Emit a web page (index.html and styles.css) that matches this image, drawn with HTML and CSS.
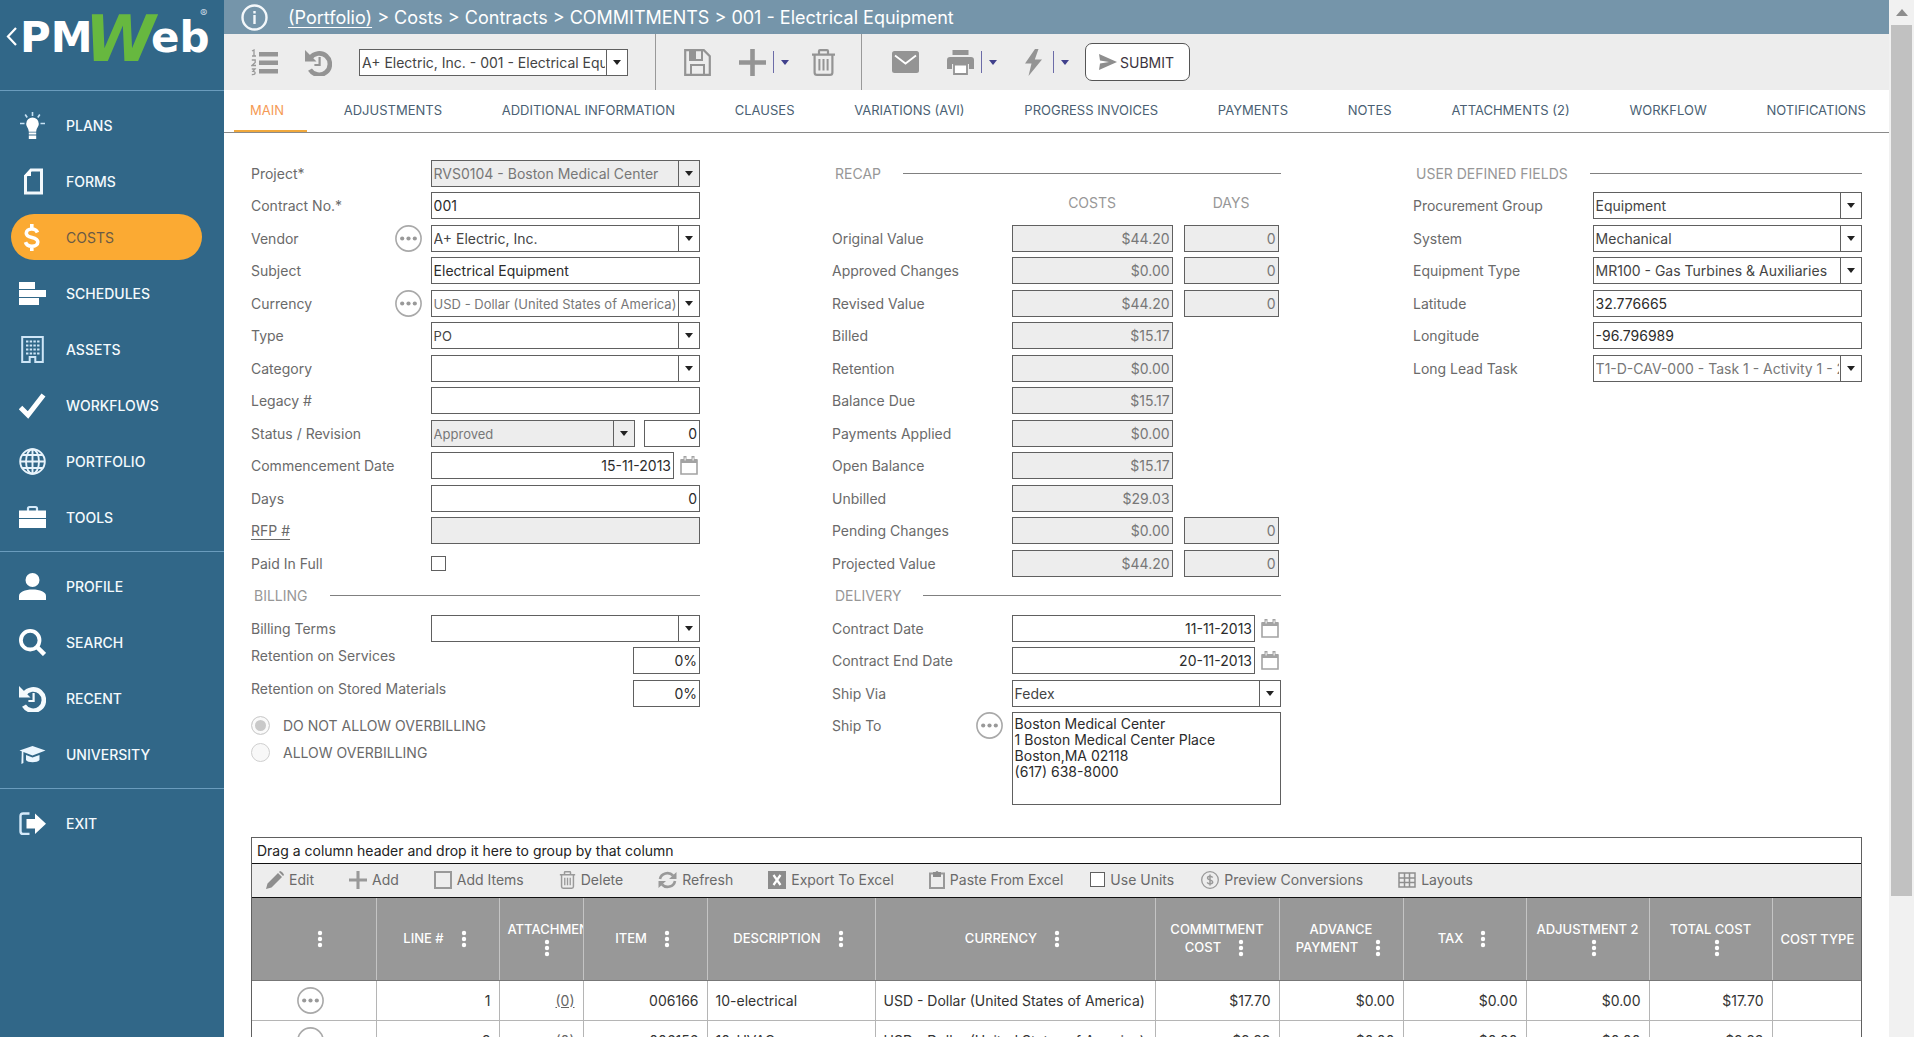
FILE: index.html
```html
<!DOCTYPE html>
<html lang="en">

<head>
    <meta charset="utf-8">
    <meta name="viewport" content="width=device-width, initial-scale=1">
    <title>001 - Electrical Equipment</title>

    <link rel="stylesheet" href="styles.css">
</head>

<body>
    <!-- shared icons -->
    <svg class="sprite" aria-hidden="true">
        <symbol id="i-more" viewBox="0 0 27 27">
            <circle cx="13.5" cy="13.5" r="12.6" fill="#fff" stroke="#a9a9a9" stroke-width="1.6" />
            <circle cx="7.2" cy="13.5" r="2.1" fill="#999" />
            <circle cx="13.5" cy="13.5" r="2.1" fill="#999" />
            <circle cx="19.8" cy="13.5" r="2.1" fill="#999" />
        </symbol>
        <symbol id="i-dots" viewBox="0 0 16 18">
            <circle cx="8" cy="3" r="2.2" />
            <circle cx="8" cy="9" r="2.2" />
            <circle cx="8" cy="15" r="2.2" />
        </symbol>
        <symbol id="i-cal" viewBox="0 0 18 19">
            <path d="M1 4h16v14H1z" fill="none" stroke="#a3a3a3" stroke-width="1.6" />
            <path d="M1 3h16v4H1zM3.5 0h3v4h-3zM11.5 0h3v4h-3z" fill="#a3a3a3" />
            <path d="M4.6 1.4h1v3h-1zM12.6 1.4h1v3h-1z" fill="#fff" />
        </symbol>
        <symbol id="i-history" viewBox="0 0 27 27">
            <path d="M5.2 9.2A10.7 10.7 0 1 1 5 20.6" fill="none" stroke="currentColor" stroke-width="4.6" />
            <path d="M0 1v11.5h11.5z" fill="currentColor" />
            <path d="M14.6 8v8H9.4" fill="none" stroke="currentColor" stroke-width="2.2" />
        </symbol>
        <symbol id="i-trash" viewBox="0 0 25 27">
            <path d="M1 5.6h23M8 5V2.2Q8 1.2 9 1.2h7q1 0 1 1V5M3.6 6v17.4q0 2.4 2.4 2.4h13q2.4 0 2.4-2.4V6" fill="none" stroke="currentColor" stroke-width="2.2" />
            <path d="M8.4 10v11.5M12.5 10v11.5M16.6 10v11.5" stroke="currentColor" stroke-width="2" />
        </symbol>
        <symbol id="i-plus" viewBox="0 0 27 27">
            <path d="M11.2 0h4.6v11.2H27v4.6H15.8V27h-4.6V15.8H0v-4.6h11.2z" fill="currentColor" />
        </symbol>
    </svg>

    <div class="app">
        <aside class="sidebar">
            <a href="#" class="logo" aria-label="PMWeb">
                <svg width="224" height="68" viewBox="0 0 224 68">
                    <path d="M16 28l-8 8.5 8 8.5" fill="none" stroke="#fff" stroke-width="2.2" />
                    <text x="20" y="52" class="logo-text">PM</text>
                    <text x="85" y="61" class="logo-w">W</text>
                    <text x="151" y="52" class="logo-text">eb</text>
                    <text x="200" y="17" class="logo-reg">®</text>
                </svg>
            </a>

            <nav class="menu">
                <a href="#"><svg viewBox="0 0 27 27"><path d="M13.5 5.5a6.3 6.3 0 0 1 6.3 6.3c0 3-2.4 4.2-2.6 8H9.8c-.2-3.8-2.6-5-2.6-8a6.3 6.3 0 0 1 6.3-6.3zM9.8 20.5h7.4v2H9.8zM9.8 23.5h7.4V27H9.8z" fill="#fff" /><path d="M13.5 0v4M6.2 2.5l2 3M20.8 2.5l-2 3M1 11.5h4.5M21.5 11.5H26" stroke="#c9e3f5" stroke-width="1.6" /></svg>PLANS</a>
                <a href="#"><svg viewBox="0 0 27 27"><path d="M12 2h10.5v23h-16V8z" fill="none" stroke="#f2f8fc" stroke-width="3" /><path d="M5 8l7-7v7z" fill="#fff" /></svg>FORMS</a>
                <a href="#" class="active"><svg viewBox="0 0 27 27"><path d="M18.5 8.5C17.5 6 15.5 5 12.8 5 9.6 5 7.3 6.7 7.3 9.2c0 6 11.5 2.6 11.5 8.8 0 2.6-2.4 4.3-5.9 4.3-3.2 0-5.5-1.3-6.4-4.2M12.8 0v5M12.8 22v5" fill="none" stroke="#fff" stroke-width="3.6" /></svg>COSTS</a>
                <a href="#"><svg viewBox="0 0 27 27"><path d="M0 2h16v7H0zM0 10h27v7H0zM0 18h20v7H0z" fill="#fff" /></svg>SCHEDULES</a>
                <a href="#"><svg viewBox="0 0 27 27"><path d="M3.2 1h20.6v25h-7.5v-5h-5.6v5H3.2z" fill="none" stroke="#cfe6f7" stroke-width="2" /><path d="M7 5.5h14M7 9.5h14M7 13.5h14M7 17.5h14" stroke="#cfe6f7" stroke-width="2.2" stroke-dasharray="2.4 1.3" /></svg>ASSETS</a>
                <a href="#"><svg viewBox="0 0 27 27"><path d="M1.5 15.5L9 23 24.5 3" fill="none" stroke="#fff" stroke-width="5" /></svg>WORKFLOWS</a>
                <a href="#"><svg viewBox="0 0 27 27"><g fill="none" stroke="#e8f4fc" stroke-width="1.9"><circle cx="13.5" cy="13.5" r="12.3" /><ellipse cx="13.5" cy="13.5" rx="6.5" ry="12.3" /><path d="M13.5 1v25M1 13.5h25M3.2 7h20.6M3.2 20h20.6" /></g></svg>PORTFOLIO</a>
                <a href="#"><svg viewBox="0 0 27 27"><path d="M9 7V4.5Q9 3 10.5 3h6Q18 3 18 4.5V7" fill="none" stroke="#d5eafa" stroke-width="2.2" /><path d="M0 6.5h27V14H0zM0 15h27v9H0z" fill="#fff" /></svg>TOOLS</a>
            </nav>
            <nav class="menu">
                <a href="#"><svg viewBox="0 0 27 27"><circle cx="13.5" cy="7" r="7" fill="#fff" /><path d="M0 27v-4c0-4 6-6.5 13.5-6.5S27 19 27 23v4z" fill="#fff" /></svg>PROFILE</a>
                <a href="#"><svg viewBox="0 0 27 27"><circle cx="11.2" cy="11.2" r="9.3" fill="none" stroke="#fff" stroke-width="3.8" /><path d="M18 18l7.5 7.5" stroke="#fff" stroke-width="4.5" /></svg>SEARCH</a>
                <a href="#"><svg><use href="#i-history" /></svg>RECENT</a>
                <a href="#"><svg viewBox="0 0 27 27"><path d="M.5 9.5L13.5 5l13 4.5-13 5zM7 14l6.5 2.5 7-2.5v5c-2 3-12 3-13.5 0zM2.8 10.5h1.6V22l-2 1z" fill="#eaf6ff" /></svg>UNIVERSITY</a>
            </nav>
            <nav class="menu">
                <a href="#"><svg viewBox="0 0 27 27"><path d="M10.5 3.5H4.2Q1.5 3.5 1.5 6.2v15q0 2.7 2.7 2.7h6.3" fill="none" stroke="#d5eafa" stroke-width="2.4" /><path d="M7.5 9H16V3.5l11 10.2L16 24v-5.5H7.5z" fill="#fff" /></svg>EXIT</a>
            </nav>
        </aside>

        <main class="main">
            <header class="crumbs">
                <svg width="27" height="27" viewBox="0 0 27 27"><circle cx="13.5" cy="13.5" r="12" fill="none" stroke="#f4f8fb" stroke-width="2.4" /><path d="M12.3 11h2.4v9h-2.4zM12.3 7h2.4v2.5h-2.4z" fill="#f4f8fb" /></svg>
                <span><a href="#">(Portfolio)</a> &gt; Costs &gt; Contracts &gt; COMMITMENTS &gt; 001 - Electrical Equipment</span>
            </header>

            <div class="toolbar">
                <div class="tools tools-nav">
                    <button aria-label="Line numbers"><svg width="27" height="27" viewBox="0 0 27 27"><path d="M8 3h19v4.5H8zM8 11.5h19V16H8zM8 20h19v4.5H8z" fill="#959595" /><path d="M1 2l2-1v6M1 7h4M.8 11h3.4v2.5L1 16.5h4M.8 20H4l-2 2.3c3 0 3 3.7-1.2 3.2" fill="none" stroke="#999" stroke-width="1.3" /></svg></button>
                    <button aria-label="History"><svg width="27" height="27"><use href="#i-history" /></svg></button>
                    <select class="record" aria-label="Record">
                        <option>A+ Electric, Inc. - 001 - Electrical Equipment</option>
                    </select>
                </div>
                <div class="tools tools-edit">
                    <button aria-label="Save"><svg width="27" height="27" viewBox="0 0 27 27"><path d="M1.2 1.2h18.6l6 6v18.6H1.2z" fill="none" stroke="#949494" stroke-width="2.2" /><path d="M6 1h12v10H6zM7 16h13v10H7z" fill="none" stroke="#949494" stroke-width="2" /><path d="M6 1h6v9H6z" fill="#949494" /></svg></button>
                    <div class="split">
                        <button aria-label="Add"><svg width="27" height="27"><use href="#i-plus" /></svg></button>
                        <button class="drop" aria-label="Add options"></button>
                    </div>
                    <button aria-label="Delete"><svg width="25" height="27"><use href="#i-trash" /></svg></button>
                </div>
                <div class="tools tools-send">
                    <button aria-label="Email"><svg width="27" height="22" viewBox="0 0 27 22"><rect width="27" height="22" rx="2.5" fill="#949494" /><path d="M3 4.5l10.5 8L24 4.5" fill="none" stroke="#fff" stroke-width="1.8" /></svg></button>
                    <div class="split">
                        <button aria-label="Print"><svg width="27" height="25" viewBox="0 0 27 25"><path d="M5.5 0h16v5h-16zM3 7h21q3 0 3 3v9h-5v-5H5v5H0v-9q0-3 3-3z" fill="#949494" /><path d="M7 14.5h13V24H7z" fill="#fff" stroke="#949494" stroke-width="1.8" /></svg></button>
                        <button class="drop" aria-label="Print options"></button>
                    </div>
                    <div class="split">
                        <button aria-label="Actions"><svg width="21" height="27" viewBox="0 0 21 27"><path d="M10 0L0 14.5h6.5L3.5 27 17 10.5H9.8L13.5 0z" fill="#949494" /></svg></button>
                        <button class="drop" aria-label="More actions"></button>
                    </div>
                    <button class="submit"><svg width="18" height="16" viewBox="0 0 18 16"><path d="M0 0l18 8-18 8 1-6.5L10 8 1 6.5z" fill="#8e8e8e" /></svg>SUBMIT</button>
                </div>
            </div>

            <nav class="tabs">
                <a href="#" class="active">MAIN</a>
                <a href="#">ADJUSTMENTS</a>
                <a href="#">ADDITIONAL INFORMATION</a>
                <a href="#">CLAUSES</a>
                <a href="#">VARIATIONS (AVI)</a>
                <a href="#">PROGRESS INVOICES</a>
                <a href="#">PAYMENTS</a>
                <a href="#">NOTES</a>
                <a href="#">ATTACHMENTS (2)</a>
                <a href="#">WORKFLOW</a>
                <a href="#">NOTIFICATIONS</a>
            </nav>

            <form class="form">
                <div class="col">
                    <div class="row">
                        <label for="project">Project*</label>
                        <select id="project" class="field muted off"><option>RVS0104 - Boston Medical Center</option></select>
                    </div>
                    <div class="row">
                        <label for="contract">Contract No.*</label>
                        <input id="contract" class="field" type="text" value="001">
                    </div>
                    <div class="row">
                        <div class="with-more">
                            <label for="vendor">Vendor</label>
                            <button type="button" aria-label="Vendor details"><svg width="27" height="27"><use href="#i-more" /></svg></button>
                        </div>
                        <select id="vendor" class="field"><option>A+ Electric, Inc.</option></select>
                    </div>
                    <div class="row">
                        <label for="subject">Subject</label>
                        <input id="subject" class="field" type="text" value="Electrical Equipment">
                    </div>
                    <div class="row">
                        <div class="with-more">
                            <label for="currency">Currency</label>
                            <button type="button" aria-label="Currency details"><svg width="27" height="27"><use href="#i-more" /></svg></button>
                        </div>
                        <select id="currency" class="field small muted"><option>USD - Dollar (United States of America)</option></select>
                    </div>
                    <div class="row">
                        <label for="type">Type</label>
                        <select id="type" class="field small"><option>PO</option></select>
                    </div>
                    <div class="row">
                        <label for="category">Category</label>
                        <select id="category" class="field"><option></option></select>
                    </div>
                    <div class="row">
                        <label for="legacy">Legacy #</label>
                        <input id="legacy" class="field" type="text">
                    </div>
                    <div class="row">
                        <label for="status">Status / Revision</label>
                        <div class="pair">
                            <select id="status" class="field small muted off"><option>Approved</option></select>
                            <input class="field num revision" type="text" value="0" aria-label="Revision">
                        </div>
                    </div>
                    <div class="row">
                        <label for="commence">Commencement Date</label>
                        <div class="date">
                            <input id="commence" class="field num" type="text" value="15-11-2013">
                            <button type="button" aria-label="Pick date"><svg width="18" height="19"><use href="#i-cal" /></svg></button>
                        </div>
                    </div>
                    <div class="row">
                        <label for="days">Days</label>
                        <input id="days" class="field num" type="text" value="0">
                    </div>
                    <div class="row">
                        <label for="rfp"><a href="#">RFP #</a></label>
                        <input id="rfp" class="field off" type="text" readonly>
                    </div>
                    <div class="row">
                        <label for="paid">Paid In Full</label>
                        <input id="paid" class="check" type="checkbox">
                    </div>
                    <h2 class="row head">BILLING</h2>
                    <div class="row">
                        <label for="terms">Billing Terms</label>
                        <select id="terms" class="field"><option></option></select>
                    </div>
                    <div class="row wide">
                        <label for="ret1">Retention on Services</label>
                        <input id="ret1" class="field num" type="text" value="0%">
                    </div>
                    <div class="row wide">
                        <label for="ret2">Retention on Stored Materials</label>
                        <input id="ret2" class="field num" type="text" value="0%">
                    </div>
                    <div class="radios">
                        <label><input type="radio" name="over" checked>DO NOT ALLOW OVERBILLING</label>
                        <label><input type="radio" name="over">ALLOW OVERBILLING</label>
                    </div>
                </div>

                <div class="col">
                    <h2 class="row head">RECAP</h2>
                    <div class="row caption"><span></span><div class="money"><span>COSTS</span><span>DAYS</span></div></div>
                    <div class="row"><label for="r1">Original Value</label><div class="money"><input id="r1" class="field num muted off" value="$44.20" readonly><input class="field num muted off" value="0" aria-label="Original days" readonly></div></div>
                    <div class="row"><label for="r2">Approved Changes</label><div class="money"><input id="r2" class="field num muted off" value="$0.00" readonly><input class="field num muted off" value="0" aria-label="Approved days" readonly></div></div>
                    <div class="row"><label for="r3">Revised Value</label><div class="money"><input id="r3" class="field num muted off" value="$44.20" readonly><input class="field num muted off" value="0" aria-label="Revised days" readonly></div></div>
                    <div class="row"><label for="r4">Billed</label><div class="money"><input id="r4" class="field num muted off" value="$15.17" readonly></div></div>
                    <div class="row"><label for="r5">Retention</label><div class="money"><input id="r5" class="field num muted off" value="$0.00" readonly></div></div>
                    <div class="row"><label for="r6">Balance Due</label><div class="money"><input id="r6" class="field num muted off" value="$15.17" readonly></div></div>
                    <div class="row"><label for="r7">Payments Applied</label><div class="money"><input id="r7" class="field num muted off" value="$0.00" readonly></div></div>
                    <div class="row"><label for="r8">Open Balance</label><div class="money"><input id="r8" class="field num muted off" value="$15.17" readonly></div></div>
                    <div class="row"><label for="r9">Unbilled</label><div class="money"><input id="r9" class="field num muted off" value="$29.03" readonly></div></div>
                    <div class="row"><label for="r10">Pending Changes</label><div class="money"><input id="r10" class="field num muted off" value="$0.00" readonly><input class="field num muted off" value="0" aria-label="Pending days" readonly></div></div>
                    <div class="row"><label for="r11">Projected Value</label><div class="money"><input id="r11" class="field num muted off" value="$44.20" readonly><input class="field num muted off" value="0" aria-label="Projected days" readonly></div></div>
                    <h2 class="row head">DELIVERY</h2>
                    <div class="row">
                        <label for="cdate">Contract Date</label>
                        <div class="date">
                            <input id="cdate" class="field num" type="text" value="11-11-2013">
                            <button type="button" aria-label="Pick date"><svg width="18" height="19"><use href="#i-cal" /></svg></button>
                        </div>
                    </div>
                    <div class="row">
                        <label for="edate">Contract End Date</label>
                        <div class="date">
                            <input id="edate" class="field num" type="text" value="20-11-2013">
                            <button type="button" aria-label="Pick date"><svg width="18" height="19"><use href="#i-cal" /></svg></button>
                        </div>
                    </div>
                    <div class="row">
                        <label for="via">Ship Via</label>
                        <select id="via" class="field"><option>Fedex</option></select>
                    </div>
                    <div class="row top">
                        <div class="with-more">
                            <label for="shipto">Ship To</label>
                            <button type="button" aria-label="Ship to details"><svg width="27" height="27"><use href="#i-more" /></svg></button>
                        </div>
                        <textarea id="shipto" class="field">Boston Medical Center
1 Boston Medical Center Place
Boston,MA 02118
(617) 638-8000</textarea>
                    </div>
                </div>

                <div class="col">
                    <h2 class="row head">USER DEFINED FIELDS</h2>
                    <div class="row">
                        <label for="group">Procurement Group</label>
                        <select id="group" class="field"><option>Equipment</option></select>
                    </div>
                    <div class="row">
                        <label for="system">System</label>
                        <select id="system" class="field"><option>Mechanical</option></select>
                    </div>
                    <div class="row">
                        <label for="etype">Equipment Type</label>
                        <select id="etype" class="field"><option>MR100 - Gas Turbines &amp; Auxiliaries</option></select>
                    </div>
                    <div class="row">
                        <label for="lat">Latitude</label>
                        <input id="lat" class="field" type="text" value="32.776665">
                    </div>
                    <div class="row">
                        <label for="lon">Longitude</label>
                        <input id="lon" class="field" type="text" value="-96.796989">
                    </div>
                    <div class="row">
                        <label for="task">Long Lead Task</label>
                        <select id="task" class="field muted"><option>T1-D-CAV-000 - Task 1 - Activity 1 - 2</option></select>
                    </div>
                </div>
            </form>

            <section class="grid">
                <p class="group-by">Drag a column header and drop it here to group by that column</p>
                <div class="grid-tools">
                    <button><svg width="18" height="18" viewBox="0 0 18 18"><path d="M0 18l1.5-5.5L12 2l4 4L5.5 16.5zM13 1l1-1q1 0 2.5 1.5T18 4l-1 1z" fill="#8e8e8e" /></svg>Edit</button>
                    <button><svg width="18" height="18"><use href="#i-plus" /></svg>Add</button>
                    <button><svg width="18" height="18" viewBox="0 0 18 18"><path d="M1 1h16v16H1z" fill="none" stroke="#999" stroke-width="2" /></svg>Add Items</button>
                    <button><svg width="17" height="18"><use href="#i-trash" /></svg>Delete</button>
                    <button><svg width="19" height="18" viewBox="0 0 19 18"><path d="M2 8a7.5 7 0 0 1 13-3.5M17 10a7.5 7 0 0 1-13 3.5" fill="none" stroke="#999" stroke-width="2.6" /><path d="M18.5 1v7H11zM.5 17v-7H8z" fill="#999" /></svg>Refresh</button>
                    <button><svg width="18" height="18" viewBox="0 0 18 18"><path d="M0 0h18v18H0z" fill="#8c8c8c" /><path d="M5.5 4l7 10M12.5 4l-7 10" stroke="#fff" stroke-width="2.2" /></svg>Export To Excel</button>
                    <button><svg width="16" height="18" viewBox="0 0 16 18"><path d="M1 2.5h14V17H1z" fill="none" stroke="#999" stroke-width="2" /><path d="M4 1h2.5q1.5-2 3 0H12v5H4z" fill="#8c8c8c" /></svg>Paste From Excel</button>
                    <label><input class="check" type="checkbox">Use Units</label>
                    <button><svg width="18" height="18" viewBox="0 0 18 18"><circle cx="9" cy="9" r="8.3" fill="none" stroke="#999" stroke-width="1.3" /><path d="M11.7 6.5C10 4.3 6.5 5 6.5 7c0 2.5 5.2 1.5 5.2 4 0 2.2-4 2.6-5.5.3M9 3.5v11" fill="none" stroke="#999" stroke-width="1.5" /></svg>Preview Conversions</button>
                    <button><svg width="18" height="16" viewBox="0 0 18 16"><path d="M1 1h16v14H1zM1 6h16M1 10.5h16M6.5 1v14M11.5 1v14" fill="none" stroke="#8e8e8e" stroke-width="1.5" /></svg>Layouts</button>
                </div>
                <table>
                    <colgroup>
                        <col class="w-menu"><col class="w-line"><col class="w-att"><col class="w-menu"><col class="w-desc"><col class="w-cur">
                        <col class="w-menu"><col class="w-menu"><col class="w-line"><col class="w-line"><col class="w-line"><col>
                    </colgroup>
                    <thead>
                        <tr>
                            <th><svg class="dots"><use href="#i-dots" /></svg></th>
                            <th>LINE #<svg class="dots"><use href="#i-dots" /></svg></th>
                            <th>ATTACHMENTS<br><svg class="dots"><use href="#i-dots" /></svg></th>
                            <th>ITEM<svg class="dots"><use href="#i-dots" /></svg></th>
                            <th>DESCRIPTION<svg class="dots"><use href="#i-dots" /></svg></th>
                            <th>CURRENCY<svg class="dots"><use href="#i-dots" /></svg></th>
                            <th>COMMITMENT<br>COST<svg class="dots"><use href="#i-dots" /></svg></th>
                            <th>ADVANCE<br>PAYMENT<svg class="dots"><use href="#i-dots" /></svg></th>
                            <th>TAX<svg class="dots"><use href="#i-dots" /></svg></th>
                            <th>ADJUSTMENT 2<br><svg class="dots"><use href="#i-dots" /></svg></th>
                            <th>TOTAL COST<br><svg class="dots"><use href="#i-dots" /></svg></th>
                            <th>COST TYPE</th>
                        </tr>
                    </thead>
                    <tbody>
                        <tr>
                            <td class="mid"><button aria-label="Row menu"><svg width="27" height="27"><use href="#i-more" /></svg></button></td>
                            <td class="num">1</td>
                            <td class="num"><a href="#">(0)</a></td>
                            <td class="num">006166</td>
                            <td>10-electrical</td>
                            <td>USD - Dollar (United States of America)</td>
                            <td class="num">$17.70</td>
                            <td class="num">$0.00</td>
                            <td class="num">$0.00</td>
                            <td class="num">$0.00</td>
                            <td class="num">$17.70</td>
                            <td></td>
                        </tr>
                        <tr>
                            <td class="mid"><button aria-label="Row menu"><svg width="27" height="27"><use href="#i-more" /></svg></button></td>
                            <td class="num">2</td>
                            <td class="num"><a href="#">(0)</a></td>
                            <td class="num">006156</td>
                            <td>10-HVAC</td>
                            <td>USD - Dollar (United States of America)</td>
                            <td class="num">$8.83</td>
                            <td class="num">$0.00</td>
                            <td class="num">$0.00</td>
                            <td class="num">$0.00</td>
                            <td class="num">$8.83</td>
                            <td></td>
                        </tr>
                    </tbody>
                </table>
            </section>
        </main>

        <div class="scrollbar" aria-hidden="true">
            <span class="scroll-up"></span>
            <span class="scroll-thumb"></span>
        </div>
    </div>
</body>

</html>
```

FILE: styles.css
```css
* {
    box-sizing: border-box;
}

body {
    margin: 0;
    font-family: Inter, "Noto Sans", sans-serif;
    font-size: 14px;
    color: #6a6a6a;
    background-color: #fff;
    overflow: hidden;
}

button {
    display: flex;
    align-items: center;
    padding: 0;
    border: none;
    background: none;
    font: inherit;
    color: inherit;
    cursor: pointer;
}

svg {
    display: block;
}

.sprite {
    display: none;
}

.app {
    display: flex;
    height: 100vh;
}

/* Sidebar */
.sidebar {
    flex: 0 0 224px;
    background-color: #316788;
}

.logo {
    display: block;
    height: 90px;
}

.logo-text {
    font: bold 42px "DejaVu Sans", sans-serif;
    fill: #fff;
}

.logo-w {
    font: italic bold 64px "DejaVu Sans", sans-serif;
    fill: #67b83f;
}

.logo-reg {
    font-size: 11px;
    fill: #c5d6e2;
}

.menu {
    padding: 6px 22px 6px 11px;
    border-top: 1px solid #6a9cbd;
}

.menu a {
    display: flex;
    align-items: center;
    gap: 20px;
    height: 46px;
    margin: 5px 0 10px;
    padding-left: 8px;
    border-radius: 23px;
    color: #f4fafd;
    font-weight: 500;
    text-decoration: none;
}

.menu a:last-child {
    margin-bottom: 5px;
}

.menu a.active {
    background-color: #fbaa33;
    color: #6a5a45;
    font-weight: 400;
}

.menu svg {
    width: 27px;
    height: 27px;
}

/* Top bars */
.main {
    flex: 1;
    min-width: 0;
    overflow: hidden;
}

.crumbs {
    display: flex;
    align-items: center;
    gap: 20px;
    height: 34px;
    padding: 0 17px;
    background-color: #7595aa;
    color: #fff;
    font-size: 18px;
}

.crumbs a {
    color: inherit;
    text-underline-offset: 3px;
}

.toolbar {
    display: flex;
    height: 56px;
    background-color: #ededed;
}

.tools {
    display: flex;
    align-items: center;
    gap: 28px;
    padding: 0 28px;
    border-right: 1px solid #999;
    color: #949494;
}

.tools-nav {
    gap: 27px;
    padding: 0 27px;
}

.tools-edit {
    padding: 0 25px 0 28px;
}

.tools-edit .split {
    margin-right: -6px;
}

.tools-send {
    padding-left: 30px;
    border-right: none;
}

.tools-send .submit {
    margin-left: -12px;
}

.split {
    display: flex;
    align-items: center;
    gap: 7px;
}

.drop {
    height: 22px;
    padding-left: 7px;
    border-left: 1px solid #6c6ca8;
}

.drop::before {
    content: "";
    border: 4px solid transparent;
    border-top: 5px solid #40408c;
    border-bottom: none;
}

.submit {
    gap: 3px;
    height: 38px;
    padding: 0 15px 0 13px;
    border: 1px solid #555;
    border-radius: 7px;
    background-color: #fff;
    color: #3c3440;
}

.tabs {
    display: flex;
    justify-content: space-between;
    height: 43px;
    padding-left: 10px;
    border-bottom: 1px solid #8a8a8a;
}

.tabs a {
    padding: 12px 23px 0 16px;
    border-bottom: 2px solid transparent;
    color: #4a5f73;
    font-size: 13px;
    line-height: 16px;
    text-decoration: none;
    white-space: nowrap;
}

.tabs a.active {
    border-color: #f0a83c;
    color: #f59a55;
}

/* Form */
.form {
    display: grid;
    grid-template-columns: repeat(3, 1fr);
    gap: 132px;
    padding: 27px 27px 32px;
}

.row {
    display: grid;
    grid-template-columns: 2fr 3fr;
    align-items: center;
    height: 27px;
    margin: 0 0 5px;
    white-space: nowrap;
}

.row:nth-child(even) {
    margin-bottom: 6px;
}

.row a {
    color: inherit;
    text-underline-offset: 3px;
}

.row.top {
    height: auto;
    align-items: start;
    margin: 0;
}

.row.wide {
    grid-template-columns: 1fr 67px;
}

.row.wide label {
    align-self: start;
}

.row.head {
    display: flex;
    gap: 22px;
    padding-left: 3px;
    color: #979797;
    font-size: 14px;
    font-weight: 400;
}

.row.head::after {
    content: "";
    flex: 1;
    border-top: 1px solid #808080;
}

.row.caption {
    padding-bottom: 6px;
    color: #979797;
    text-align: center;
}

.with-more {
    display: flex;
    align-items: center;
    justify-content: space-between;
    padding-right: 9px;
}

.field,
.record {
    width: 100%;
    min-width: 0;
    height: 27px;
    padding: 0 2px;
    border: 1px solid #606060;
    border-radius: 0;
    background-color: #fff;
    color: #2b2b2b;
    font: inherit;
}

select.field,
.record {
    appearance: none;
    padding-right: 22px;
    background-image: url("data:image/svg+xml,%3Csvg xmlns='http://www.w3.org/2000/svg' width='21' height='25'%3E%3Cpath d='M.5 0v25' stroke='%23606060'/%3E%3Cpath d='M7 10h8l-4 5z' fill='%23222'/%3E%3C/svg%3E");
    background-repeat: no-repeat;
    background-position: right center;
    color: #444;
}

.record {
    width: 269px;
}

.field.small {
    font-size: 13px;
}

select.field.muted,
.field.muted {
    color: #777;
}

.field.off {
    background-color: #ededed;
}

.num {
    text-align: right;
}

textarea.field {
    display: block;
    height: 93px;
    padding: 3px 2px;
    line-height: 16px;
    resize: none;
}

.pair {
    display: flex;
    gap: 9px;
}

.pair .revision {
    flex: 0 0 56px;
}

.date {
    display: flex;
    align-items: center;
    gap: 6px;
    padding-right: 2px;
}

.money {
    display: grid;
    grid-template-columns: 161px 95px;
    gap: 11px;
}

.check {
    appearance: none;
    width: 15px;
    height: 15px;
    margin: 0;
    border: 1px solid #606060;
    background-color: #fff;
}

.radios label {
    display: flex;
    align-items: center;
    gap: 13px;
    height: 27px;
}

.radios input {
    appearance: none;
    width: 19px;
    height: 19px;
    margin: 0;
    border: 1px solid #cfcfcf;
    border-radius: 50%;
    background-color: #f8f8f8;
}

.radios input:checked {
    background-color: #c9c9c9;
    box-shadow: inset 0 0 0 3px #fafafa;
}

/* Line item grid */
.grid {
    margin: 0 27px;
    border: 1px solid #606060;
}

.group-by {
    margin: 0;
    padding: 0 5px;
    color: #222;
    line-height: 25px;
}

.grid-tools {
    display: flex;
    align-items: center;
    gap: 35px;
    height: 35px;
    padding: 0 0 2px 14px;
    border: solid #111;
    border-width: 1px 0;
    background-color: #ededed;
    white-space: nowrap;
}

.grid-tools button,
.grid-tools label {
    display: flex;
    align-items: center;
    gap: 5px;
}

.grid-tools svg {
    color: #999;
}

.grid-tools label {
    margin: 0 -8px;
}

.grid table {
    width: 100%;
    table-layout: fixed;
    border-collapse: collapse;
}

.w-menu {
    width: 124px;
}

.w-line {
    width: 123px;
}

.w-att {
    width: 84px;
}

.w-desc {
    width: 168px;
}

.w-cur {
    width: 280px;
}

.grid th {
    height: 82px;
    padding: 0 8px;
    overflow: hidden;
    border-right: 1px solid #c4c4c4;
    border-bottom: 1px solid #777;
    background-color: #989898;
    color: #fff;
    font-size: 13px;
    font-weight: 500;
    line-height: 18px;
    white-space: nowrap;
}

.dots {
    display: inline-block;
    width: 16px;
    height: 18px;
    margin-left: 12px;
    fill: #fff;
    vertical-align: middle;
}

.grid td {
    height: 40px;
    padding: 0 8px;
    border-right: 1px solid #b5b5b5;
    border-bottom: 1px solid #b5b5b5;
    color: #333;
    white-space: nowrap;
}

.grid td a {
    color: #666;
}

.grid th:last-child,
.grid td:last-child {
    border-right: none;
}

.grid td.mid {
    padding-right: 14px;
}

.mid button {
    margin: 0 auto;
}

/* Scrollbar */
.scrollbar {
    display: flex;
    flex: 0 0 25px;
    flex-direction: column;
    padding: 0 2px;
    background-color: #f1f1f1;
}

.scroll-up {
    flex: 0 0 25px;
    display: grid;
    place-items: center;
}

.scroll-up::before {
    content: "";
    border: 6px solid transparent;
    border-bottom: 7px solid #8d8d8d;
    border-top: none;
}

.scroll-thumb {
    flex: 0 0 84%;
    background-color: #c1c1c1;
}
```
